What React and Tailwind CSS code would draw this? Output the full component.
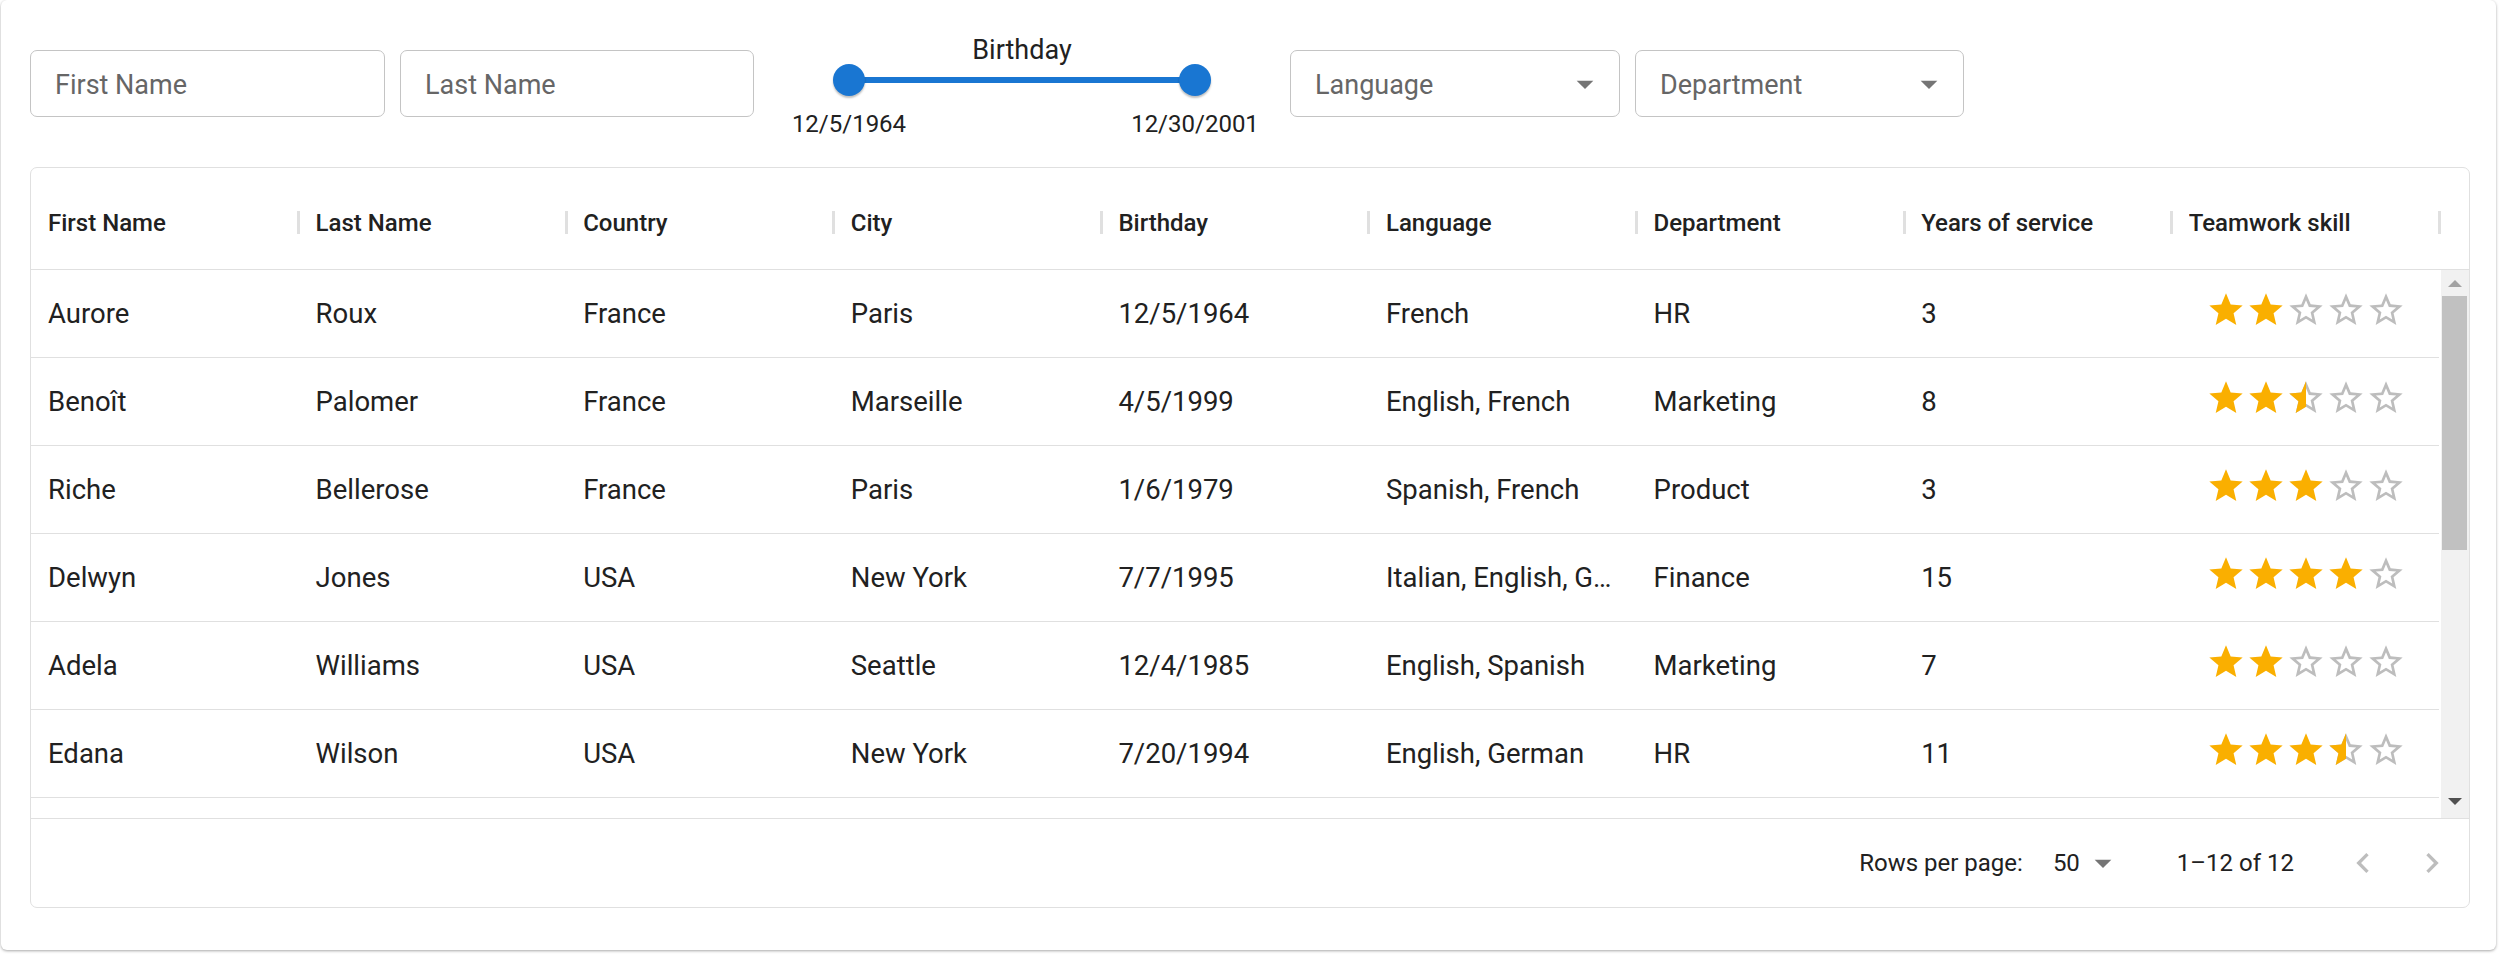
import React from 'react';

const COLUMNS = ['First Name', 'Last Name', 'Country', 'City', 'Birthday', 'Language', 'Department', 'Years of service', 'Teamwork skill'];

const ROWS = [
  ['Aurore', 'Roux', 'France', 'Paris', '12/5/1964', 'French', 'HR', '3', 2],
  ['Benoît', 'Palomer', 'France', 'Marseille', '4/5/1999', 'English, French', 'Marketing', '8', 2.5],
  ['Riche', 'Bellerose', 'France', 'Paris', '1/6/1979', 'Spanish, French', 'Product', '3', 3],
  ['Delwyn', 'Jones', 'USA', 'New York', '7/7/1995', 'Italian, English, German', 'Finance', '15', 4],
  ['Adela', 'Williams', 'USA', 'Seattle', '12/4/1985', 'English, Spanish', 'Marketing', '7', 2],
  ['Edana', 'Wilson', 'USA', 'New York', '7/20/1994', 'English, German', 'HR', '11', 3.5],
];

const STAR = 'M12 17.27L18.18 21l-1.64-7.03L22 9.24l-7.19-.61L12 2 9.19 8.63 2 9.24l5.46 4.73L5.82 21z';
const STAR_BORDER = 'M22 9.24l-7.19-.62L12 2 9.19 8.63 2 9.24l5.46 4.73L5.82 21 12 17.27 18.18 21l-1.63-7.03L22 9.24zM12 15.4l-3.76 2.27 1-4.28-3.32-2.88 4.38-.38L12 6.1l1.71 4.04 4.38.38-3.32 2.88 1 4.28L12 15.4z';

const DropArrow = ({ className }) => (
  <svg viewBox="0 0 24 24" className={className} fill="currentColor">
    <path d="M7 10l5 5 5-5z" />
  </svg>
);

const Rating = ({ value }) => (
  <div className="flex pb-[8px]">
    {[1, 2, 3, 4, 5].map((i) => {
      const full = value >= i;
      const half = !full && value >= i - 0.5;
      return (
        <div key={i} className="relative w-[40px] h-[40px]">
          <svg viewBox="0 0 24 24" className={`w-[40px] h-[40px] ${full ? 'text-[#faaf00]' : 'text-[#bdbdbd]'}`} fill="currentColor">
            <path d={full ? STAR : STAR_BORDER} />
          </svg>
          {half && (
            <div className="absolute left-0 top-0 w-[20px] h-[40px] overflow-hidden">
              <svg viewBox="0 0 24 24" className="w-[40px] h-[40px] text-[#faaf00]" fill="currentColor">
                <path d={STAR} />
              </svg>
            </div>
          )}
        </div>
      );
    })}
  </div>
);

const TextField = ({ placeholder, width }) => (
  <div className={`${width} h-[67px] mt-[18px] border border-[#c4c4c4] rounded-[7px] flex items-center pl-[24px] pt-[4px]`}>
    <input
      readOnly
      placeholder={placeholder}
      className="w-full bg-transparent outline-none text-[27px] placeholder:text-[#666666]"
    />
  </div>
);

const SelectField = ({ label, width, className = '' }) => (
  <div className={`${width} ${className} h-[67px] mt-[18px] border border-[#c4c4c4] rounded-[7px] flex items-center pl-[24px] pr-[14px]`}>
    <span className="flex-1 text-[27px] text-[#666666] pt-[4px]">{label}</span>
    <DropArrow className="w-[40px] h-[40px] text-[#757575]" />
  </div>
);

const BirthdaySlider = () => (
  <div className="w-[536px] flex flex-col">
    <div className="h-[32px] leading-[32px] text-center text-[27px] text-[#212121] pt-[2px]">Birthday</div>
    <div className="relative h-[32px] mx-[79px]">
      <div className="absolute left-[16px] right-[16px] top-[13px] h-[6px] bg-[#1976d2]" />
      <div className="absolute left-0 top-0 w-[32px] h-[32px] rounded-full bg-[#1976d2] shadow-[0_2px_2px_rgba(0,0,0,0.25)]" />
      <div className="absolute right-0 top-0 w-[32px] h-[32px] rounded-full bg-[#1976d2] shadow-[0_2px_2px_rgba(0,0,0,0.25)]" />
    </div>
    <div className="flex justify-between px-[15px] mt-[14px]">
      <span className="w-[160px] text-center text-[24px] leading-[28px] text-[#212121]">12/5/1964</span>
      <span className="w-[160px] text-center text-[24px] leading-[28px] text-[#212121]">12/30/2001</span>
    </div>
  </div>
);

export default function App() {
  return (
    <div className="w-[2500px] h-[955px] bg-white font-[Roboto,sans-serif] text-[#212121]">
      <div className="ml-[1px] w-[2495px] h-[950px] bg-white rounded-[6px] shadow-[0_1px_3px_rgba(0,0,0,0.35)] pt-[32px] pl-[29px]">
        {/* Filters */}
        <div className="flex items-start">
          <TextField placeholder="First Name" width="w-[355px]" />
          <div className="w-[15px]" />
          <TextField placeholder="Last Name" width="w-[354px]" />
          <BirthdaySlider />
          <SelectField label="Language" width="w-[330px]" />
          <SelectField label="Department" width="w-[329px]" className="ml-[15px]" />
        </div>

        {/* Grid */}
        <div className="mt-[29px] w-[2440px] h-[741px] border border-[#e0e0e0] rounded-[7px] flex flex-col overflow-hidden">
          <div className="h-[102px] border-b border-[#e0e0e0] flex items-center pt-[8px] shrink-0">
            {COLUMNS.map((c) => (
              <div key={c} className="w-[267.6px] shrink-0 flex items-center pl-[17px]">
                <span className="flex-1 text-[24px] font-medium text-[#212121] truncate">{c}</span>
                <div className="w-[3px] h-[23px] bg-[#e0e0e0] mr-[-1.5px]" />
              </div>
            ))}
          </div>

          <div className="h-[548px] flex overflow-hidden shrink-0">
            <div className="w-[2408.4px] shrink-0">
              {ROWS.map((r, idx) => (
                <div key={idx} className="h-[88px] border-b border-[#e0e0e0] flex items-center">
                  {r.slice(0, 8).map((v, j) => (
                    <div key={j} className="w-[267.6px] shrink-0 pl-[17px] pr-[17px] text-[27.5px] text-[#212121] truncate">
                      {v}
                    </div>
                  ))}
                  <div className="w-[267.6px] shrink-0 flex justify-center">
                    <Rating value={r[8]} />
                  </div>
                </div>
              ))}
              {/* next row, cut off by the viewport */}
              <div className="h-[88px] border-b border-[#e0e0e0]" />
            </div>
            <div className="flex-1 bg-[#f1f1f1] ml-[1.5px] flex flex-col items-stretch">
              <div className="h-[26px] flex items-center justify-center">
                <div className="w-0 h-0 border-l-[7px] border-r-[7px] border-b-[7px] border-l-transparent border-r-transparent border-b-[#a3a3a3]" />
              </div>
              <div className="h-[254px] bg-[#c1c1c1] ml-[1px] mr-[2px]" />
              <div className="flex-1" />
              <div className="h-[32px] flex items-center justify-center pb-[2px]">
                <div className="w-0 h-0 border-l-[7px] border-r-[7px] border-t-[7px] border-l-transparent border-r-transparent border-t-[#505050]" />
              </div>
            </div>
          </div>

          <div className="flex-1 border-t border-[#e0e0e0] flex items-center justify-end pr-[17px] text-[24px] text-[#212121]">
            <span>Rows per page:</span>
            <span className="ml-[30px]">50</span>
            <DropArrow className="w-[40px] h-[40px] text-[#757575] ml-[3px]" />
            <span className="ml-[54px]">1–12 of 12</span>
            <svg viewBox="0 0 24 24" className="w-[40px] h-[40px] ml-[49px] text-[#bdbdbd]" fill="currentColor">
              <path d="M15.41 16.59L10.83 12l4.58-4.59L14 6l-6 6 6 6 1.41-1.41z" />
            </svg>
            <svg viewBox="0 0 24 24" className="w-[40px] h-[40px] ml-[29px] text-[#bdbdbd]" fill="currentColor">
              <path d="M8.59 16.59L13.17 12 8.59 7.41 10 6l6 6-6 6-1.41-1.41z" />
            </svg>
          </div>
        </div>
      </div>
    </div>
  );
}
